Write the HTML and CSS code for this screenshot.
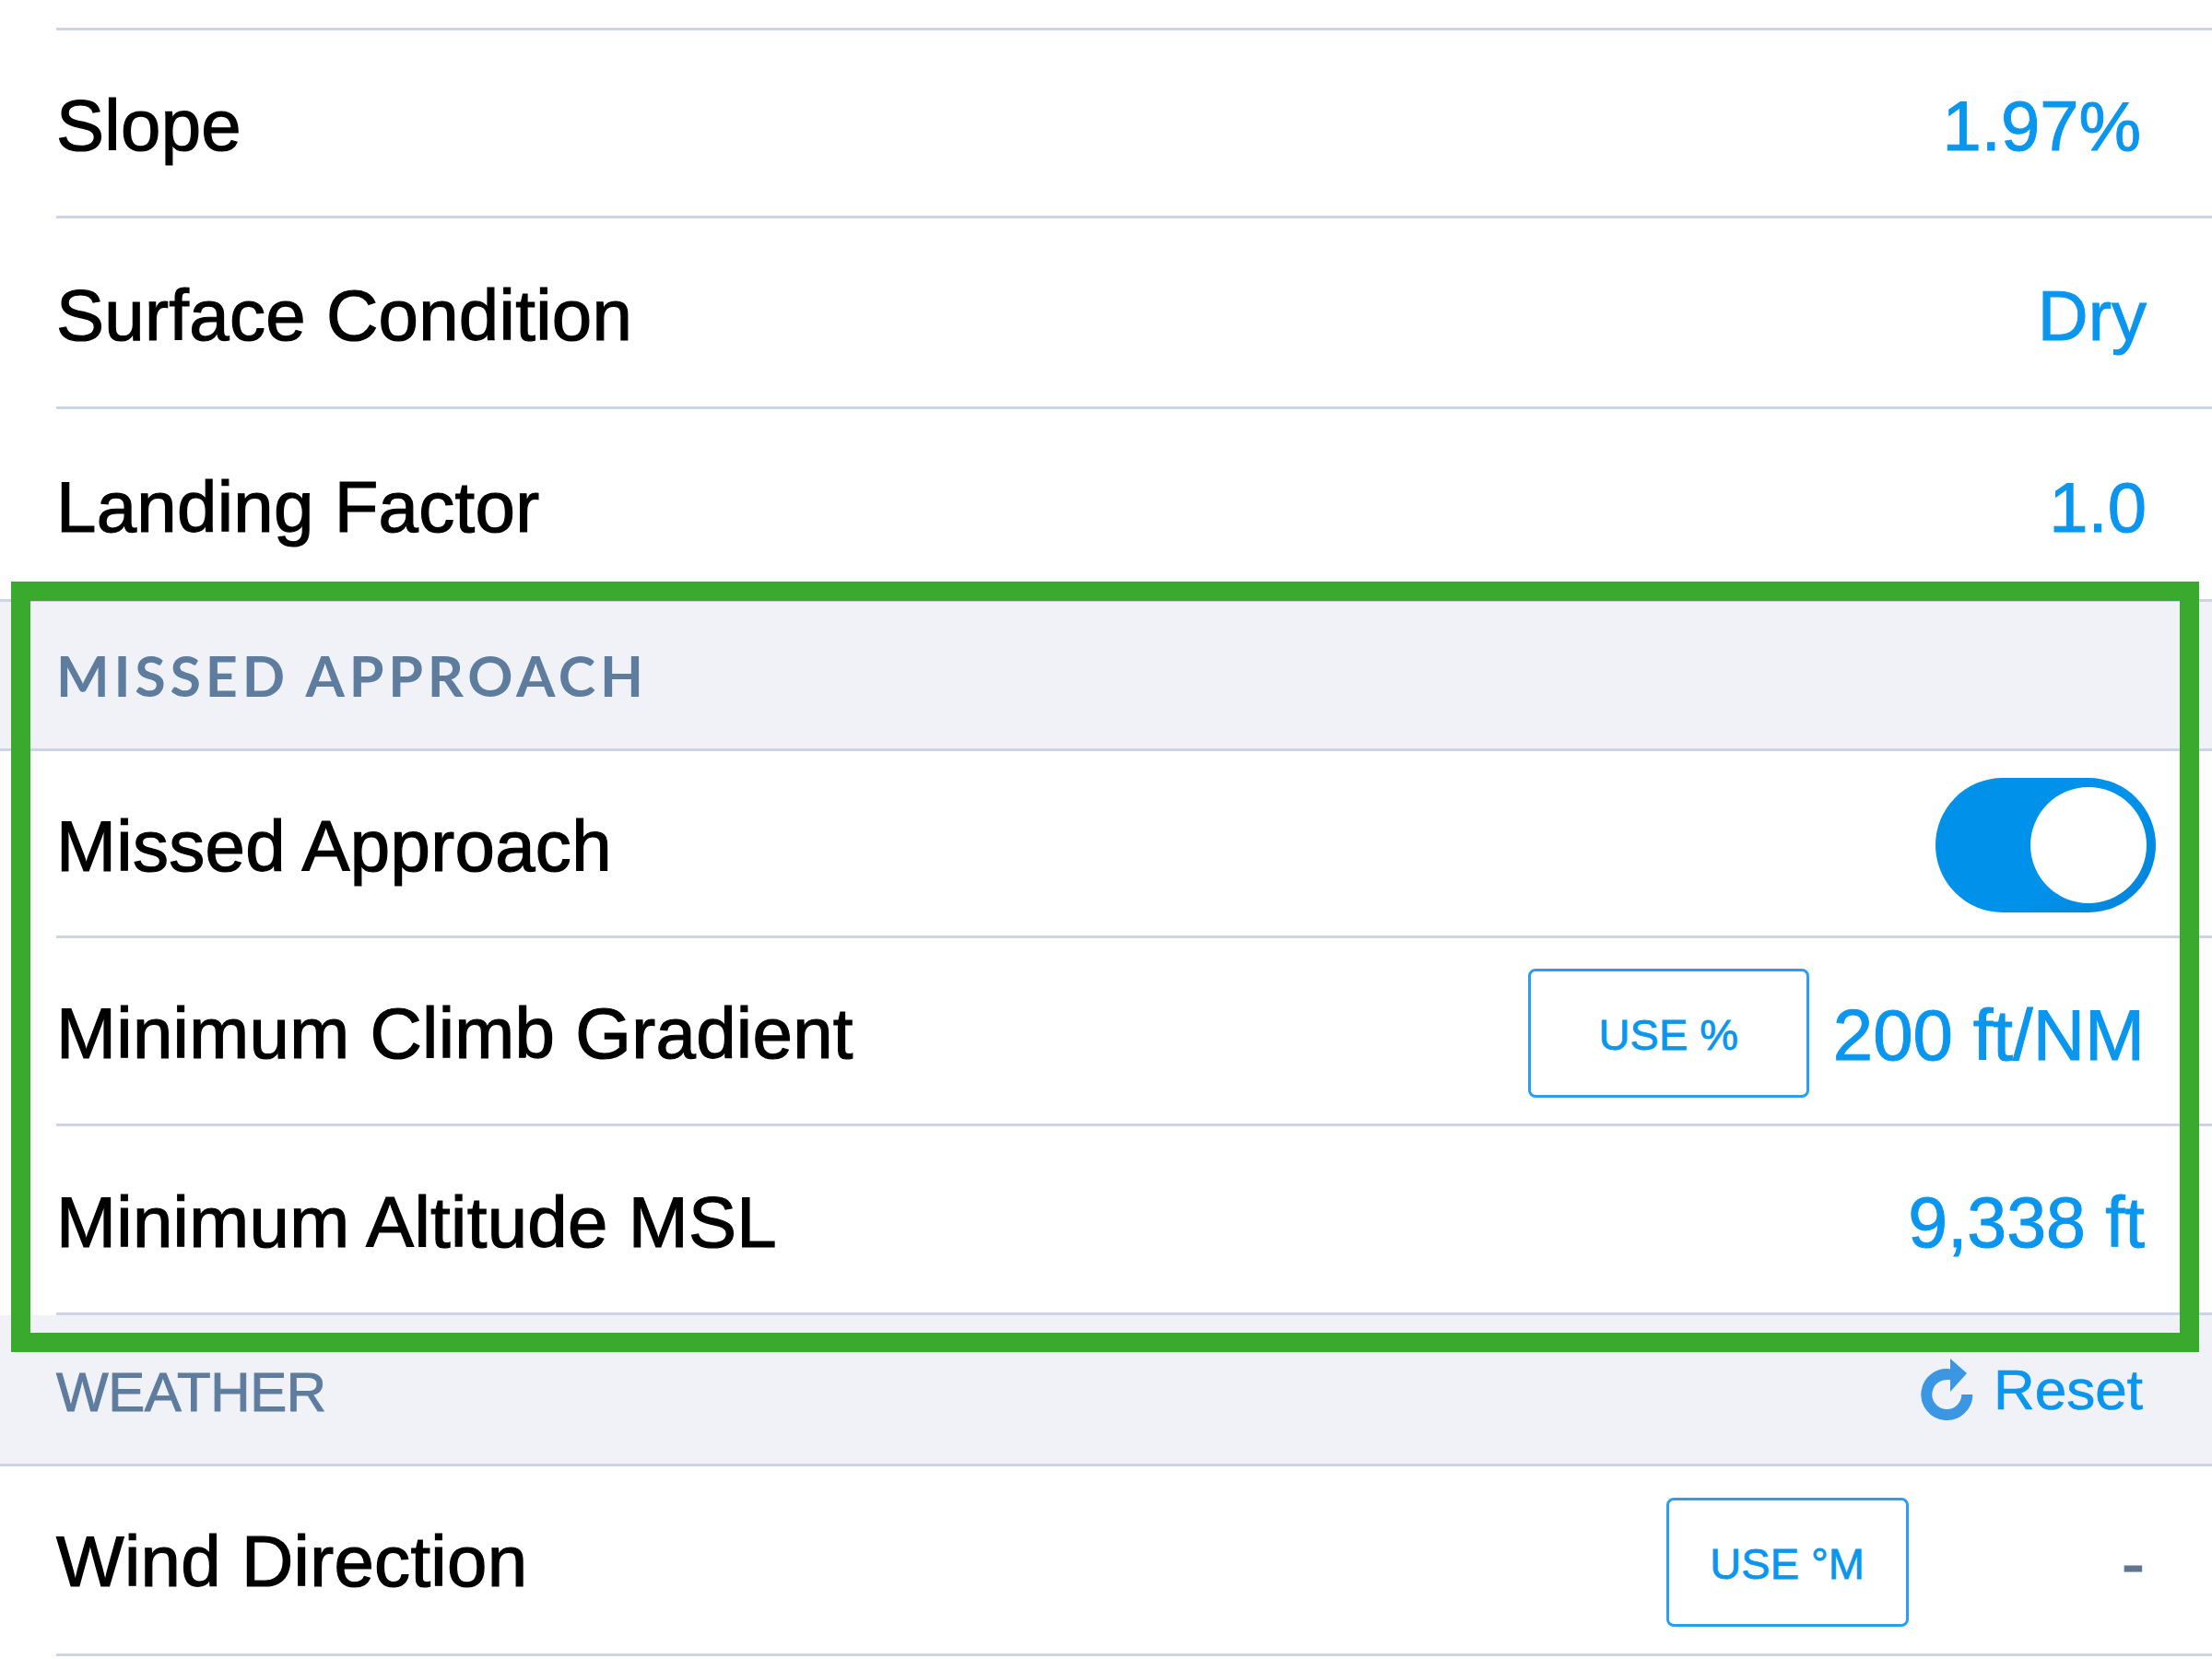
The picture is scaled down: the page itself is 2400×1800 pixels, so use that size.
FILE: index.html
```html
<!DOCTYPE html>
<html lang="en">
<head>
<meta charset="utf-8">
<title>Missed Approach</title>
<link rel="stylesheet" href="styles.css">
</head>
<body>
<main class="page">
  <div class="lead"></div>
  <div class="row row-slope"><span class="label">Slope</span><span class="value value-pct">1.97%</span></div>
  <div class="row row-surface"><span class="label">Surface Condition</span><span class="value value-end">Dry</span></div>
  <div class="row row-landing"><span class="label">Landing Factor</span><span class="value value-end">1.0</span></div>

  <section class="band band-missed">
    <h2 class="band-title band-title-lato">MISSED APPROACH</h2>
  </section>
  <div class="row row-missed"><span class="label">Missed Approach</span><span class="toggle"><span class="knob"></span></span></div>
  <div class="row row-climb"><span class="label">Minimum Climb Gradient</span><span class="controls"><button class="chip chip-pct">USE %</button><span class="value value-wide">200 ft/NM</span></span></div>
  <div class="row row-altitude"><span class="label">Minimum Altitude MSL</span><span class="value value-mid">9,338 ft</span></div>

  <section class="band band-weather">
    <h2 class="band-title">WEATHER</h2>
    <span class="reset">
      <svg class="reset-icon" viewBox="0 0 57 67" aria-hidden="true"><path class="reset-ring" d="M50.3 39 A22 22 0 1 1 33 17.5"/><path class="reset-head" d="M32 0 L50 16 L32 36 Z"/></svg>
      Reset
    </span>
  </section>
  <div class="row row-wind"><span class="label">Wind Direction</span><span class="controls"><button class="chip chip-deg">USE °M</button><span class="value value-empty">-</span></span></div>

  <div class="highlight"></div>
</main>
</body>
</html>
```
FILE: styles.css
```css
* { box-sizing: border-box; }
html, body { margin: 0; padding: 0; background: #fff; }
body { width: 2400px; height: 1800px; overflow: hidden; font-family: "Liberation Sans", Arial, sans-serif; }
.page { position: relative; width: 2400px; height: 1800px; }
.lead { height: 33px; margin-left: 61px; border-bottom: 3px solid #ccd3e2; }
.row {
  display: flex; align-items: center; justify-content: space-between;
  margin-left: 61px; padding-right: 73px;
  border-bottom: 3px solid #ccd3e2;
}
.row-slope { height: 204px; }
.row-surface { height: 207px; }
.row-landing { height: 206px; border-bottom: 0; }
.row-missed { height: 203px; }
.row-climb { height: 204px; }
.row-altitude { height: 205px; }
.row-wind { height: 206px; }
.label { font-size: 78px; letter-spacing: 0.3px; color: #000; -webkit-text-stroke: 1.2px #000; position: relative; top: 3px; }
.row-wind .label { top: 2px; }
.value { font-size: 76px; color: #0a96ef; -webkit-text-stroke: 1px #0a96ef; position: relative; top: 3px; }
.value-pct { margin-right: 4px; }
.value-end { margin-right: -2px; }
.value-mid { font-size: 77px; }
.value-wide { font-size: 78px; top: 5px; }
.value-empty { color: #62758f; -webkit-text-stroke: 1px #62758f; margin-left: 231px; }
.controls { display: flex; align-items: center; }
.chip {
  position: relative; top: 2px;
  height: 140px; padding: 4px 0 0; background: #fff; border: 3px solid #2a9ef0; border-radius: 8px;
  font: 47px "Liberation Sans", Arial, sans-serif; color: #0a96ef; -webkit-text-stroke: 0.8px #0a96ef;
}
.chip-pct { width: 305px; margin-right: 26px; }
.chip-deg { width: 263px; }
.toggle {
  position: relative; top: 2px;
  display: flex; justify-content: flex-end; align-items: center;
  width: 239px; height: 146px; padding-right: 10px; margin-right: -12px;
  border-radius: 73px; background: linear-gradient(135deg, #0091ea 62%, #0582d8 100%);
}
.knob { width: 126px; height: 126px; border-radius: 50%; background: #fff; }
.band {
  display: flex; align-items: center; justify-content: space-between;
  padding: 0 73px 0 61px;
  background: #f0f2f8; border-bottom: 3px solid #ccd3e2;
}
.band-missed { height: 165px; border-top: 3px solid #ccd3e2; }
.band-weather { height: 164px; }
.band-title { position: relative; top: 3px; margin: 0; font-size: 60px; font-weight: 400; letter-spacing: -0.4px; color: #5e7d9e; -webkit-text-stroke: 1px #5e7d9e; }
.band-title-lato { top: 0; font-family: Lato, "Liberation Sans", sans-serif; font-size: 61px; font-weight: 700; letter-spacing: 4.8px; -webkit-text-stroke: 0; }
.reset { display: flex; align-items: center; gap: 22px; margin-right: 2px; font-size: 62px; color: #0a96ef; -webkit-text-stroke: 0.7px #0a96ef; }
.reset-icon { width: 57px; height: 67px; }
.reset-ring { fill: none; stroke: #3b96e3; stroke-width: 12; }
.reset-head { fill: #3b96e3; }
.highlight { position: absolute; left: 12px; top: 631px; width: 2374px; height: 836px; border: 21px solid #3aaa2e; }
```
